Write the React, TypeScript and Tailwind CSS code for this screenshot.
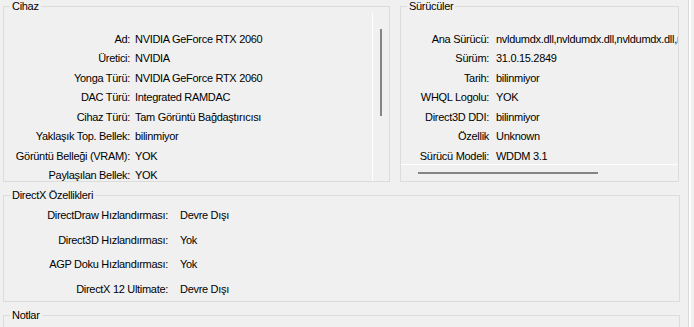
import React from "react";

const cihaz: [string, string][] = [
  ["Ad:", "NVIDIA GeForce RTX 2060"],
  ["Üretici:", "NVIDIA"],
  ["Yonga Türü:", "NVIDIA GeForce RTX 2060"],
  ["DAC Türü:", "Integrated RAMDAC"],
  ["Cihaz Türü:", "Tam Görüntü Bağdaştırıcısı"],
  ["Yaklaşık Top. Bellek:", "bilinmiyor"],
  ["Görüntü Belleği (VRAM):", "YOK"],
  ["Paylaşılan Bellek:", "YOK"],
];

const surucu: [string, string][] = [
  ["Ana Sürücü:", "nvldumdx.dll,nvldumdx.dll,nvldumdx.dll,nvldumdx.dll"],
  ["Sürüm:", "31.0.15.2849"],
  ["Tarih:", "bilinmiyor"],
  ["WHQL Logolu:", "YOK"],
  ["Direct3D DDI:", "bilinmiyor"],
  ["Özellik", "Unknown"],
  ["Sürücü Modeli:", "WDDM 3.1"],
];

const dx: [string, string][] = [
  ["DirectDraw Hızlandırması:", "Devre Dışı"],
  ["Direct3D Hızlandırması:", "Yok"],
  ["AGP Doku Hızlandırması:", "Yok"],
  ["DirectX 12 Ultimate:", "Devre Dışı"],
];

function Legend({ children }: { children: React.ReactNode }) {
  return (
    <legend className="ml-[6px] px-[2px] text-[11px] leading-[12px] tracking-[-0.3px]">
      {children}
    </legend>
  );
}

export default function App() {
  return (
    <div className="w-[694px] h-[327px] bg-[#f0f0f0] overflow-hidden flex text-black font-['Liberation_Sans',Arial,sans-serif]">
      <div className="w-[688px] shrink-0 pl-[3px] flex flex-col">
        <div className="flex gap-[10px]">
          {/* Cihaz */}
          <fieldset className="w-[387px] h-[182px] border border-[#dcdcdc] flex">
            <Legend>Cihaz</Legend>
            <div className="flex h-[169px] w-full">
              <div className="w-[368px] h-full overflow-hidden pt-[18px] text-[11px] tracking-[-0.3px]">
                {cihaz.map(([k, v]) => (
                  <div key={k} className="flex h-[19.43px] leading-[19.43px] whitespace-nowrap">
                    <div className="w-[126px] text-right">{k}</div>
                    <div className="ml-[5px]">{v}</div>
                  </div>
                ))}
              </div>
              <div className="w-px h-full bg-white" />
              <div className="w-[16px] h-full pt-[17px] pl-[7px]">
                <div className="w-[2px] h-[87px] bg-[#858585]" />
              </div>
            </div>
          </fieldset>
          {/* Sürücüler */}
          <fieldset className="w-[279px] h-[182px] border border-[#dcdcdc] flex">
            <Legend>Sürücüler</Legend>
            <div className="flex flex-col w-full h-[169px]">
              <div className="h-[152px] w-[277px] overflow-hidden pt-[18px] text-[11px] tracking-[-0.3px]">
                {surucu.map(([k, v]) => (
                  <div key={k} className="flex h-[19.43px] leading-[19.43px] whitespace-nowrap">
                    <div className="w-[88px] shrink-0 text-right">{k}</div>
                    <div className="ml-[7px]">{v}</div>
                  </div>
                ))}
              </div>
              <div className="h-px w-full bg-white" />
              <div className="pt-[7px] pl-[17px]">
                <div className="h-[2px] w-[180px] bg-[#858585]" />
              </div>
            </div>
          </fieldset>
        </div>
        {/* DirectX */}
        <fieldset className="mt-[7px] w-[677px] h-[116px] border border-[#dcdcdc]">
          <Legend>DirectX Özellikleri</Legend>
          <div className="pt-[2px] text-[11px] tracking-[-0.3px]">
            {dx.map(([k, v]) => (
              <div key={k} className="flex h-[24.5px] leading-[24.5px] whitespace-nowrap">
                <div className="w-[164px] text-right">{k}</div>
                <div className="ml-[12px]">{v}</div>
              </div>
            ))}
          </div>
        </fieldset>
        {/* Notlar */}
        <fieldset className="mt-[7px] w-[677px] h-[60px] border border-[#dcdcdc] shrink-0">
          <Legend>Notlar</Legend>
        </fieldset>
      </div>
      <div className="w-px h-full bg-[#dadada]" />
      <div className="w-[2px] h-full bg-white" />
    </div>
  );
}
